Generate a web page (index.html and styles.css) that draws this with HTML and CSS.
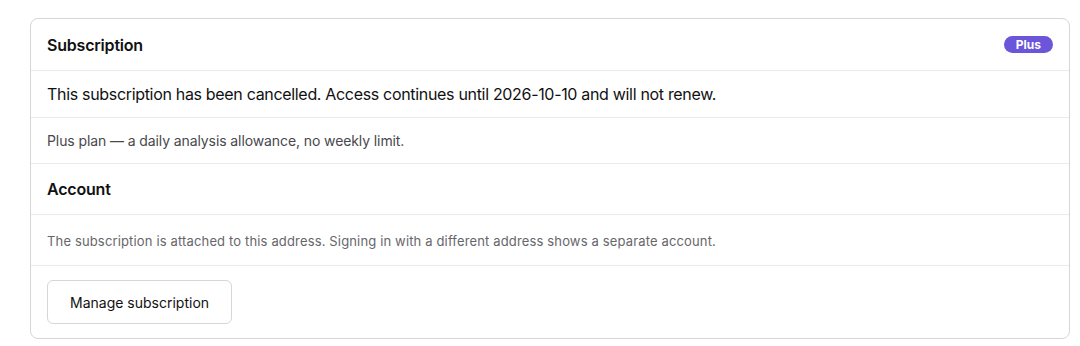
FILE: index.html
```html
<!DOCTYPE html>
<html lang="en">
<head>
  <meta charset="UTF-8">
  <meta name="viewport" content="width=device-width, initial-scale=1.0">
  <title>Subscription</title>
  <link rel="stylesheet" href="styles.css">
</head>
<body>
  <div class="card">
    <div class="row row-head">
      <h2>Subscription</h2>
      <span class="badge">Plus</span>
    </div>
    <div class="row row-status">
      This subscription has been cancelled. Access continues until 2026-10-10 and will not renew.
    </div>
    <div class="row row-plan">
      Plus plan — a daily analysis allowance, no weekly limit.
    </div>
    <div class="row row-head row-account">
      <h2>Account</h2>
    </div>
    <div class="row row-note">
      The subscription is attached to this address. Signing in with a different address shows a separate account.
    </div>
    <div class="row row-actions">
      <button class="btn">Manage subscription</button>
    </div>
  </div>
</body>
</html>
```

FILE: styles.css
```css
:root {
  --text-color: #111111;
  --muted-color: #48484d;
  --note-color: #66666b;
  --border-color: #d6d6d6;
  --divider-color: #ebebeb;
  --badge-color: #6b55d9;
}

body {
  font-family: Inter, 'Liberation Sans', sans-serif;
  margin: 0;
  padding: 18px 10px 0 30px;
  background: #ffffff;
  color: var(--text-color);
}
.card {
  border: 1px solid var(--border-color);
  border-radius: 8px;
  overflow: hidden;
  background: #ffffff;
}
.row {
  padding: 0 16px;
  border-bottom: 1px solid var(--divider-color);
  display: flex;
  align-items: center;
  box-sizing: border-box;
}
.row:last-child {
  border-bottom: none;
}
.row-head {
  height: 52px;
  justify-content: space-between;
}
.row-account {
  height: 51px;
}
h2 {
  font-size: 16px;
  font-weight: 600;
  letter-spacing: -0.2px;
  margin: 0;
}
.badge {
  background: var(--badge-color);
  color: #ffffff;
  font-size: 12px;
  font-weight: 700;
  line-height: 17px;
  padding: 0 12px;
  border-radius: 999px;
}
.row-status {
  height: 47px;
  font-size: 16px;
  letter-spacing: -0.32px;
}
.row-plan {
  height: 46px;
  font-size: 14px;
  letter-spacing: -0.1px;
  color: var(--muted-color);
}
.row-note {
  height: 51px;
  font-size: 13px;
  letter-spacing: 0.15px;
  color: var(--note-color);
  padding-top: 1px;
}
.row-actions {
  padding-top: 14px;
  padding-bottom: 14px;
}
.btn {
  font-family: inherit;
  font-size: 14px;
  color: var(--text-color);
  background: #ffffff;
  border: 1px solid var(--border-color);
  border-radius: 6px;
  height: 44px;
  padding: 0 22px;
  cursor: pointer;
}
```
